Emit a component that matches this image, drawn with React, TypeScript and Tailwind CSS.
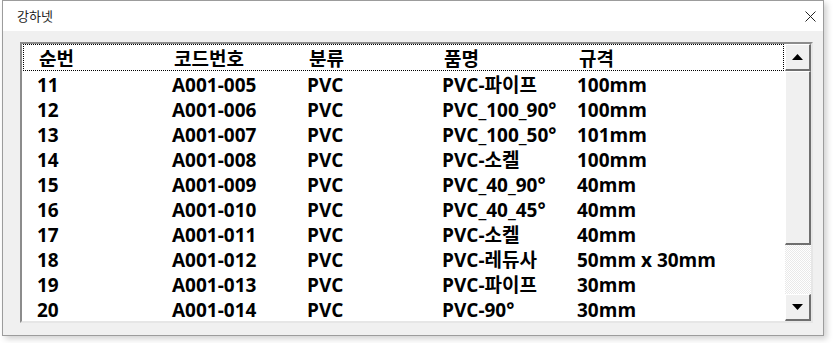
import React from 'react';

const rows = [
  ['11', 'A001-005', 'PVC', 'PVC-파이프', '100mm'],
  ['12', 'A001-006', 'PVC', 'PVC_100_90°', '100mm'],
  ['13', 'A001-007', 'PVC', 'PVC_100_50°', '101mm'],
  ['14', 'A001-008', 'PVC', 'PVC-소켈', '100mm'],
  ['15', 'A001-009', 'PVC', 'PVC_40_90°', '40mm'],
  ['16', 'A001-010', 'PVC', 'PVC_40_45°', '40mm'],
  ['17', 'A001-011', 'PVC', 'PVC-소켈', '40mm'],
  ['18', 'A001-012', 'PVC', 'PVC-레듀사', '50mm x 30mm'],
  ['19', 'A001-013', 'PVC', 'PVC-파이프', '30mm'],
  ['20', 'A001-014', 'PVC', 'PVC-90°', '30mm'],
];

const Row = ({ cells }: { cells: string[] }) => (
  <div className="flex h-[25px] items-center pl-[15px] pt-[3px]">
    {cells.map((c, i) => (
      <div key={i} className="w-[135px] shrink-0 whitespace-nowrap">
        {c}
      </div>
    ))}
  </div>
);

const Arrow = ({ up }: { up?: boolean }) => (
  <svg width="11" height="6" viewBox="0 0 11 6">
    <polygon points={up ? '5.5,0 11,6 0,6' : '0,0 11,0 5.5,6'} fill="#000" />
  </svg>
);

const ScrollButton = ({ up }: { up?: boolean }) => (
  <div className="h-[27px] flex items-center justify-center bg-[#f0f0f0] border-t border-l border-white border-r-2 border-b-2 border-r-[#6f6f6f] border-b-[#6f6f6f]">
    <Arrow up={up} />
  </div>
);

export default function App() {
  return (
    <div className="w-[833px] h-[343px] bg-white pl-[2px]">
      <div
        className="w-[822px] h-[336px] flex flex-col border border-[#9c9c9c] shadow-[3px_3px_6px_rgba(0,0,0,0.18)]"
        style={{ fontFamily: '"Noto Sans CJK KR", sans-serif' }}
      >
        {/* title bar */}
        <div className="h-[30px] bg-white flex items-center justify-between pl-[14px] pr-[7px]">
          <span className="text-[13px] text-[#222]">강하넷</span>
          <svg width="11" height="11" viewBox="0 0 11 11">
            <path d="M0.5 0.5 L10.5 10.5 M10.5 0.5 L0.5 10.5" stroke="#222" strokeWidth="1" />
          </svg>
        </div>

        {/* body */}
        <div className="flex-1 bg-[#f0f0f0] pt-[11px] pl-[17px] pr-[10px] pb-[12px]">
          <div className="h-full flex border-t-2 border-l-2 border-t-[#8c8c8c] border-l-[#8c8c8c] border-r-2 border-b-2 border-r-[#e6e6e6] border-b-[#e6e6e6]">
            <div
              className="flex-1 bg-white text-[19px] font-bold text-black leading-none"
              style={{ fontFamily: '"Open Sans", "Noto Sans CJK KR", sans-serif' }}
            >
              <div className="ml-[1px] mr-[1px] border border-dotted border-black">
                <Row cells={['순번', '코드번호', '분류', '품명', '규격']} />
              </div>
              {rows.map((r) => (
                <Row key={r[0]} cells={r} />
              ))}
            </div>

            {/* scrollbar */}
            <div className="w-[26px] flex flex-col">
              <ScrollButton up />
              <div className="h-[174px] bg-[#f0f0f0] border-t border-l border-white border-r-2 border-b-2 border-r-[#6f6f6f] border-b-[#6f6f6f]" />
              <div className="flex-1 bg-[repeating-conic-gradient(#ffffff_0_25%,#e9e9e9_0_50%)] bg-[length:2px_2px]" />
              <ScrollButton />
            </div>
          </div>
        </div>
      </div>
    </div>
  );
}
